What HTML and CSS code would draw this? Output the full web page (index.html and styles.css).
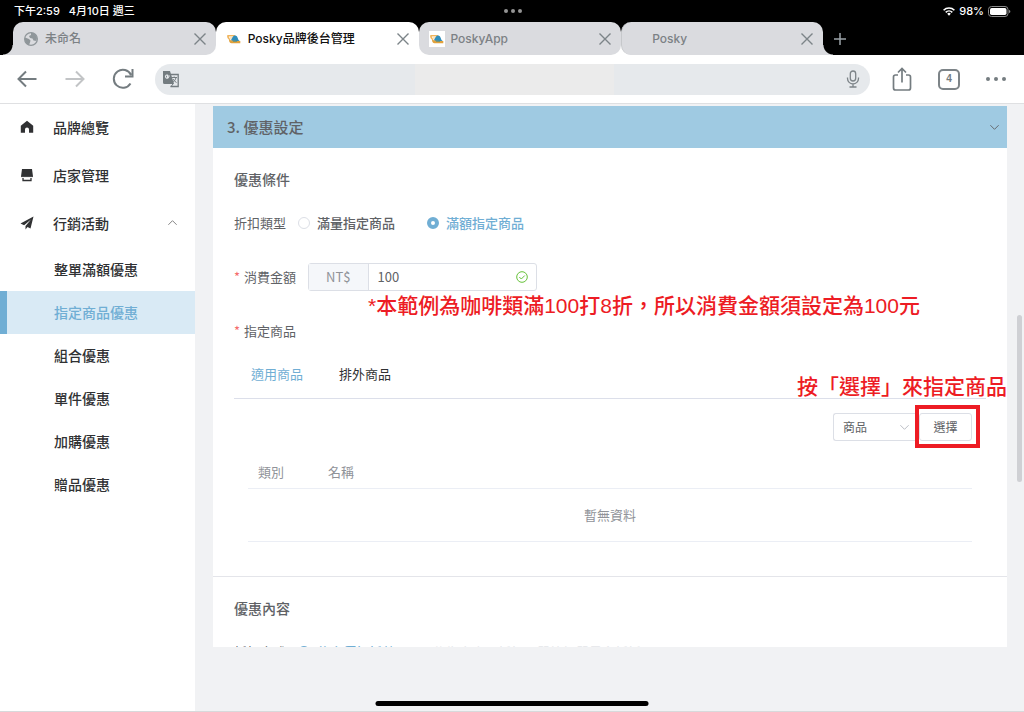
FILE: index.html
```html
<!DOCTYPE html>
<html lang="zh-Hant">
<head>
    <meta charset="UTF-8">
    <meta name="viewport" content="width=device-width, initial-scale=1.0">
    <title>Posky品牌後台管理</title>
    <link rel="stylesheet" href="styles.css">
</head>
<body>
    <svg class="symbols" aria-hidden="true">
        <symbol id="icon-close" viewBox="0 0 14 14">
            <path d="M1.500 1.500l11 11M12.500 1.500l-11 11" fill="none" stroke="currentColor" stroke-width="1.400"/>
        </symbol>
        <symbol id="icon-posky" viewBox="0 0 16 16">
            <path d="M1.500 4.800h7.500M1.800 4.500c0 2.500.7 3.500 2.500 4" fill="none" stroke="#f0b45c" stroke-width="1.500"/>
            <path d="M3 5.500h5l-2 2.500H4z" fill="#fbe3bd"/>
            <path d="M5 9l2-3.500c1-1.500 3.500-1.500 4.300.5l1.200 3 1.500 1.300H6z" fill="#2f8dbb"/>
            <path d="M3 8.500c2 1 5 1.500 11.300 1.500v2.200H5.500C4 12.200 3 11 3 8.500z" fill="#e0a13c"/>
            <path d="M7 10.200h4" stroke="#4f8f8a" stroke-width="1"/>
        </symbol>
        <symbol id="icon-chevron" viewBox="0 0 12 12">
            <path d="M1.500 3.500L6 8l4.500-4.500" fill="none" stroke="currentColor"/>
        </symbol>
    </svg>

    <header class="browser">
        <div class="status">
            <div class="status-time"><span>下午2:59</span><span>4月10日 週三</span></div>
            <div class="status-dots"><i></i><i></i><i></i></div>
            <div class="status-power">
                <svg width="12" height="9" viewBox="0 0 12 9"><g fill="none" stroke="#fff" stroke-width="1.600"><path d="M.6 3.300a7.600 7.600 0 0 1 10.800 0"/><path d="M2.700 5.400a4.700 4.700 0 0 1 6.600 0"/></g><path d="M4.200 6.800a2.500 2.500 0 0 1 3.600 0L6 8.800z" fill="#fff"/></svg>
                <span>98%</span>
                <svg width="23" height="11" viewBox="0 0 23 11"><rect x=".5" y=".5" width="19.500" height="10" rx="3" fill="none" stroke="#8a8a8a"/><rect x="2" y="2" width="16.500" height="7" rx="1.700" fill="#fff"/><path d="M21 4v3c1-.3 1.300-.8 1.300-1.500S22 4.300 21 4z" fill="#8a8a8a"/></svg>
            </div>
        </div>

        <div class="tab-strip">
            <ul class="tabs">
                <li class="tab tab-first">
                    <svg width="16" height="16" viewBox="0 0 16 16"><circle cx="8" cy="8" r="6.400" fill="none" stroke="#8f969a" stroke-width="1.200"/><path d="M2 6.500l4 1.500 1.500 1.500-.5 2-1 2.500C3 13 1.500 10 2 6.500zM8 1.800c3 0 5.500 2 6 5L13.500 10l-3-.5-1-2-2.500-.5L6 5l2-1z" fill="#8f969a"/></svg>
                    <span class="tab-title">未命名</span>
                    <button class="tab-close" aria-label="關閉"><svg width="14" height="14"><use href="#icon-close"/></svg></button>
                </li>
                <li class="tab tab-active">
                    <svg width="16" height="16"><use href="#icon-posky"/></svg>
                    <span class="tab-title">Posky品牌後台管理</span>
                    <button class="tab-close" aria-label="關閉"><svg width="14" height="14"><use href="#icon-close"/></svg></button>
                </li>
                <li class="tab">
                    <svg class="white-icon" width="16" height="16"><use href="#icon-posky"/></svg>
                    <span class="tab-title">PoskyApp</span>
                    <button class="tab-close" aria-label="關閉"><svg width="14" height="14"><use href="#icon-close"/></svg></button>
                </li>
                <li class="tab tab-last">
                    <svg width="16" height="16"></svg>
                    <span class="tab-title">Posky</span>
                    <button class="tab-close" aria-label="關閉"><svg width="14" height="14"><use href="#icon-close"/></svg></button>
                </li>
            </ul>
            <button class="new-tab" aria-label="新分頁"><svg width="14" height="14" viewBox="0 0 14 14"><path d="M7 1v12M1 7h12" stroke="currentColor" stroke-width="1.500"/></svg></button>
        </div>

        <div class="toolbar">
            <button aria-label="上一頁"><svg width="22" height="22" viewBox="0 0 22 22"><path d="M20.500 11H2.500M10 3.500L2.500 11l7.500 7.500" fill="none" stroke="currentColor" stroke-width="2"/></svg></button>
            <button class="dim" aria-label="下一頁"><svg width="22" height="22" viewBox="0 0 22 22"><path d="M1.500 11H19.500M12 3.500l7.500 7.500-7.500 7.500" fill="none" stroke="currentColor" stroke-width="2"/></svg></button>
            <button aria-label="重新整理"><svg width="22" height="22" viewBox="0 0 22 22"><path d="M18.500 15.500A9 9 0 1 1 19 7M20.500 1v7.500H13" fill="none" stroke="currentColor" stroke-width="2"/></svg></button>
            <div class="address">
                <svg width="18" height="18" viewBox="0 0 18 18"><path d="M8 4.500h8.200v12H8.500" fill="none" stroke="#747c80" stroke-width="1.300"/><path d="M1 1h7l4 13H2.500A1.500 1.500 0 0 1 1 12.500z" fill="#747c80"/><path d="M7.800 6H5.500v1.300h1A1.600 1.600 0 1 1 6 5.300" fill="none" stroke="#e6e9ec" stroke-width="1.100"/><path d="M9.500 7.500h5.500M12.200 6.500v1M14 7.700c-.5 2-1.700 3.500-3 4.500M11 9c.8 1.500 2 2.800 3.500 3.500M9 16.500l2-2.500" fill="none" stroke="#747c80"/></svg>
                <input type="text" aria-label="網址">
                <svg width="14" height="18" viewBox="0 0 14 18"><g fill="none" stroke="#7d8488" stroke-width="1.300"><rect x="4.300" y="1" width="5.400" height="10" rx="2.700"/><path d="M1.500 7.500v1a5.500 5.500 0 0 0 11 0v-1M7 14v3M3.500 17h7"/></g></svg>
            </div>
            <button aria-label="分享"><svg width="20" height="24" viewBox="0 0 20 24"><path d="M6 8H3.500A2 2 0 0 0 1.500 10v11a2 2 0 0 0 2 2h13a2 2 0 0 0 2-2V10a2 2 0 0 0-2-2H14M10 15.500V2M6 5.500l4-4 4 4" fill="none" stroke="currentColor" stroke-width="1.700"/></svg></button>
            <button class="tab-count">4</button>
            <button aria-label="更多"><svg width="20" height="4" viewBox="0 0 20 4"><g fill="currentColor"><circle cx="2" cy="2" r="2"/><circle cx="10" cy="2" r="2"/><circle cx="18" cy="2" r="2"/></g></svg></button>
        </div>
    </header>

    <div class="page">
        <nav class="sidebar">
            <ul class="menu">
                <li><a href="#">
                    <svg width="14" height="14" viewBox="0 0 14 14"><path d="M7 .8L.8 5.800V12.800H5V9.500a2 2 0 0 1 4 0v3.300h4.200V5.800z" fill="currentColor"/></svg>
                    品牌總覽</a></li>
                <li><a href="#">
                    <svg width="14" height="14" viewBox="0 0 14 14"><path d="M2 1h10l1 7.500c-.5 1-1.500 1-2 0-.5 1-1.500 1-2 0-.5 1-1.500 1-2 0-.5 1-1.500 1-2 0-.5 1-1.500 1-2 0-.5 1-1.500 1-2 0z" fill="currentColor"/><path d="M3 10v2.500h8V10" fill="none" stroke="currentColor" stroke-width="1.300"/></svg>
                    店家管理</a></li>
                <li><a href="#">
                    <svg width="14" height="14" viewBox="0 0 14 14"><path d="M13.500.5L.5 7.500l3.600 1.700L11 3.500 5.500 10v3.500l2-2.500 3 1.500z" fill="currentColor"/></svg>
                    行銷活動
                    <svg class="menu-arrow" width="11" height="11"><use href="#icon-chevron"/></svg></a></li>
            </ul>
            <ul class="submenu">
                <li><a href="#">整單滿額優惠</a></li>
                <li><a class="active" href="#">指定商品優惠</a></li>
                <li><a href="#">組合優惠</a></li>
                <li><a href="#">單件優惠</a></li>
                <li><a href="#">加購優惠</a></li>
                <li><a href="#">贈品優惠</a></li>
            </ul>
        </nav>

        <main class="content">
            <form class="card">
                <h2 class="card-header">3. 優惠設定 <svg width="11" height="11"><use href="#icon-chevron"/></svg></h2>

                <section class="section">
                    <h3>優惠條件</h3>
                    <div class="form-row">
                        <span class="form-label">折扣類型</span>
                        <label class="radio"><input type="radio" name="type">滿量指定商品</label>
                        <label class="radio"><input type="radio" name="type" checked>滿額指定商品</label>
                    </div>
                    <div class="form-row amount-row">
                        <label class="form-label required" for="amount">消費金額</label>
                        <div class="input-group">
                            <span class="prefix">NT$</span>
                            <input type="text" id="amount" value="100">
                            <svg width="12" height="12" viewBox="0 0 12 12"><circle cx="6" cy="6" r="5.300" fill="none" stroke="#67c23a"/><path d="M3.300 6l2 2 3.500-3.500" fill="none" stroke="#67c23a"/></svg>
                        </div>
                        <p class="note note-amount">*本範例為咖啡類滿100打8折，所以消費金額須設定為100元</p>
                    </div>
                    <div class="form-row"><span class="form-label required">指定商品</span></div>

                    <div class="goods-tabs">
                        <button type="button" class="active">適用商品</button>
                        <button type="button">排外商品</button>
                        <p class="note note-select">按「選擇」來指定商品</p>
                    </div>
                    <div class="goods">
                        <div class="goods-tools">
                            <div class="select">
                                <select aria-label="類型"><option>商品</option></select>
                                <svg width="11" height="11"><use href="#icon-chevron"/></svg>
                            </div>
                            <button type="button" class="choose">選擇</button>
                        </div>
                        <table class="goods-table">
                            <thead>
                                <tr><th class="col-type">類別</th><th>名稱</th></tr>
                            </thead>
                            <tbody>
                                <tr><td colspan="2">暫無資料</td></tr>
                            </tbody>
                        </table>
                    </div>
                </section>

                <section class="section">
                    <h3>優惠內容</h3>
                    <div class="form-row">
                        <span class="form-label">折扣方式</span>
                        <label class="radio"><input type="radio" name="method" checked>依定價打折數</label>
                        <span class="hint">依指定商品折扣，單筆訂單最多折抵</span>
                    </div>
                </section>
            </form>
            <div class="scrollbar"></div>
        </main>
        <div class="home-bar"></div>
    </div>
</body>
</html>
```
FILE: styles.css
```css
* {
    box-sizing: border-box;
}

body {
    margin: 0;
    height: 100vh;
    display: flex;
    flex-direction: column;
    overflow: hidden;
    font-family: "Noto Sans CJK TC", sans-serif;
    font-size: 13px;
    line-height: 20px;
    color: #606266;
}

h2, h3, p, ul {
    margin: 0;
    padding: 0;
}

ul {
    list-style: none;
}

a {
    color: inherit;
    text-decoration: none;
}

button, input, select {
    font: inherit;
    color: inherit;
    margin: 0;
    padding: 0;
    border: none;
    background: none;
}

button {
    cursor: pointer;
}

svg {
    display: block;
    flex: none;
}

.symbols {
    position: absolute;
    width: 0;
    height: 0;
}

/* browser */
.browser {
    flex: none;
    background-color: #fff;
    border-bottom: 1px solid #dfe0e2;
}

.status {
    display: grid;
    grid-template-columns: 1fr auto 1fr;
    align-items: center;
    height: 22px;
    padding: 0 13px 0 14px;
    background-color: #000;
    color: #fff;
    font-family: Inter, "Noto Sans CJK TC", sans-serif;
    font-size: 11px;
    font-weight: 500;
}

.status-time {
    display: flex;
    gap: 9px;
}

.status-dots {
    display: flex;
    gap: 3px;
}

.status-dots i {
    width: 4px;
    height: 4px;
    border-radius: 50%;
    background-color: #949494;
}

.status-power {
    display: flex;
    align-items: center;
    justify-content: flex-end;
    gap: 4px;
}

.tab-strip {
    display: flex;
    height: 33px;
    padding-left: 13px;
    background-color: #000;
}

.tabs {
    flex: 1;
    display: flex;
    background: linear-gradient(#000 50%, #fff 50%);
}

.tab {
    position: relative;
    flex: 1;
    display: flex;
    align-items: center;
    gap: 6px;
    padding: 0 9px 0 10px;
    border-radius: 10px;
    background-color: #dadbdf;
    color: #7c8185;
    font-family: Inter, "Noto Sans CJK TC", sans-serif;
    font-size: 12px;
    font-weight: 500;
}

.tab-active {
    background-color: #fff;
    color: #111;
}

.tab-first {
    border-bottom-left-radius: 0;
}

.tab-last {
    padding-left: 8px;
    border-bottom-right-radius: 0;
    border-left: 1px solid #c6c8cb;
}

.tab-first::before,
.tab-last::after {
    content: "";
    position: absolute;
    bottom: 0;
    width: 10px;
    height: 10px;
}

.tab-first::before {
    right: 100%;
    background: radial-gradient(circle at 0 0, #000 9px, #dadbdf 10px);
}

.tab-last::after {
    left: 100%;
    background: radial-gradient(circle at 100% 0, #000 9px, #dadbdf 10px);
}

.tab-title {
    flex: 1;
}

.white-icon {
    background-color: #fff;
}

.tab-close {
    color: #7c8488;
}

.new-tab {
    width: 201px;
    padding-left: 10px;
    color: #9ba3a8;
}

.toolbar {
    display: flex;
    align-items: center;
    gap: 26px;
    height: 48px;
    padding: 0 18px 0 16px;
    color: #747c80;
}

.toolbar .dim {
    color: #c2c4c6;
}

.toolbar .tab-count {
    width: 22px;
    height: 21px;
    border: 2px solid #7d8488;
    border-radius: 5px;
    font: bold 10px/16px "Liberation Sans", sans-serif;
}

.address {
    flex: 1;
    display: flex;
    align-items: center;
    height: 31px;
    margin: 0 -4px 0 -5px;
    padding: 0 10px 0 7px;
    border-radius: 16px;
    background: linear-gradient(#ebebeb, #ebebeb) 260px 0 / 199px 100% no-repeat #e6e9ec;
}

.address input {
    flex: 1;
    min-width: 0;
}

/* page */
.page {
    position: relative;
    flex: 1;
    min-height: 0;
    display: flex;
    background-color: #f1f2f4;
    border-bottom: 1px solid #d8d9db;
}

.sidebar {
    width: 195px;
    background-color: #fff;
    color: #303133;
    font-size: 14px;
    font-weight: 500;
}

.menu a {
    display: flex;
    align-items: center;
    gap: 19px;
    height: 48px;
    padding: 0 17px 3px 20px;
}

.menu-arrow {
    margin-left: auto;
    color: #777;
    transform: rotate(180deg);
}

.submenu a {
    display: block;
    padding: 11px 0 12px 54px;
}

.submenu .active {
    padding-left: 47px;
    border-left: 7px solid #70aed4;
    background-color: #d9eaf5;
    color: #70aed4;
}

.content {
    position: relative;
    flex: 1;
    min-width: 0;
    padding: 2px 17px 64px 18px;
}

.card {
    height: 100%;
    overflow: hidden;
    background-color: #fff;
}

.card-header {
    display: flex;
    align-items: center;
    justify-content: space-between;
    height: 42px;
    padding: 0 7px 0 14px;
    background-color: #9fcae2;
    font-size: 15px;
    font-weight: 500;
}

.section {
    padding: 21px 21px 34px;
}

.section + .section {
    border-top: 1px solid #e4e5ea;
}

.section h3 {
    margin-bottom: 24px;
    font-size: 14px;
    font-weight: 500;
}

.form-row {
    display: flex;
    align-items: center;
}

.form-label {
    margin-right: 12px;
}

.required::before {
    content: "*";
    margin-right: 4px;
    color: #f56c6c;
}

.radio {
    display: flex;
    align-items: center;
    gap: 7px;
    margin-right: 32px;
    font-weight: 500;
}

.radio:has(:checked) {
    color: #70aed4;
}

.radio input {
    appearance: none;
    width: 12px;
    height: 12px;
    border: 1px solid #dcdfe6;
    border-radius: 50%;
    background-color: #fff;
}

.radio input:checked {
    border: 4px solid #70aed4;
}

.amount-row {
    position: relative;
    margin: 30px 0;
}

.input-group {
    display: flex;
    align-items: center;
    width: 229px;
    height: 28px;
    padding-right: 8px;
    border: 1px solid #dcdfe6;
    border-radius: 3px;
}

.prefix {
    align-self: stretch;
    padding: 3px 17px;
    border-right: 1px solid #dcdfe6;
    background-color: #f5f7fa;
    color: #909399;
}

.input-group input {
    flex: 1;
    min-width: 0;
    padding-left: 9px;
}

.note {
    position: absolute;
    color: #ed1c24;
    font-family: "Liberation Sans", "Noto Sans CJK TC", sans-serif;
    font-size: 21px;
    font-weight: 500;
    line-height: 30px;
    white-space: nowrap;
}

.note-amount {
    top: 28px;
    left: 134px;
}

.goods-tabs {
    position: relative;
    display: flex;
    gap: 36px;
    padding: 23px 17px 14px;
    border-bottom: 1px solid #dcdfea;
    color: #303133;
}

.goods-tabs .active {
    color: #70aed4;
}

.note-select {
    right: -21px;
    bottom: -4px;
}

.goods {
    padding: 14px 14px 0;
}

.goods-tools {
    display: flex;
    justify-content: flex-end;
    gap: 4px;
    font-size: 12px;
}

.select {
    position: relative;
    width: 82px;
}

.select select {
    appearance: none;
    width: 100%;
    height: 28px;
    padding-left: 9px;
    border: 1px solid #dcdfe6;
    border-right: none;
    border-radius: 3px 0 0 3px;
    background-color: #fff;
}

.select svg {
    position: absolute;
    top: 9px;
    right: 5px;
    color: #b5b8bf;
    pointer-events: none;
}

.choose {
    position: relative;
    width: 53px;
    height: 28px;
    border: 1px solid #dcdfe6;
    border-radius: 3px;
}

/* red highlight frame */
.choose::after {
    content: "";
    position: absolute;
    inset: -9px -9px -8px -5px;
    border: 4px solid #ed1c24;
}

.goods-table {
    width: 100%;
    margin-top: 15px;
    border-collapse: collapse;
    color: #909399;
}

.goods-table th {
    padding: 6px 10px;
    border-bottom: 1px solid #ebeef5;
    font-weight: 400;
    text-align: left;
}

.goods-table .col-type {
    width: 70px;
}

.goods-table td {
    padding: 16px 0;
    border-bottom: 1px solid #ebeef5;
    text-align: center;
}

.hint {
    margin-left: 6px;
    color: #e4e6e9;
}

.scrollbar {
    position: absolute;
    top: 211px;
    right: 2px;
    width: 5px;
    height: 167px;
    border-radius: 3px;
    background-color: #cfd0d4;
}

.home-bar {
    position: absolute;
    left: 50%;
    bottom: 5px;
    width: 273px;
    height: 5px;
    border-radius: 3px;
    background-color: #000;
    transform: translateX(-50%);
}
```
